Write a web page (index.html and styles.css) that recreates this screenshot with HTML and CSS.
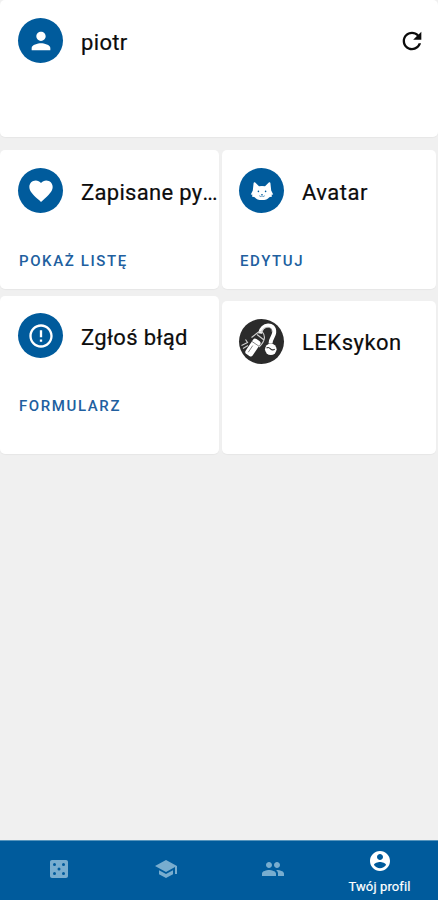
FILE: index.html
```html
<!DOCTYPE html>
<html lang="pl">
<head>
<meta charset="utf-8">
<meta name="viewport" content="width=device-width, initial-scale=1">
<title>Twój profil</title>
<link rel="stylesheet" href="styles.css">
</head>
<body>
<div class="app">
  <main class="content">
    <section class="card card-user">
      <span class="avatar"><svg viewBox="0 0 24 24"><path d="M12 12c2.21 0 4-1.79 4-4s-1.79-4-4-4-4 1.79-4 4 1.79 4 4 4zm0 2c-2.67 0-8 1.34-8 4v2h16v-2c0-2.66-5.33-4-8-4z"/></svg></span>
      <h2 class="title title-user">piotr</h2>
      <button class="refresh" aria-label="Odśwież"><svg viewBox="0 0 24 24"><path d="M17.65 6.35C16.2 4.9 14.21 4 12 4c-4.42 0-7.99 3.58-7.99 8s3.57 8 7.99 8c3.73 0 6.84-2.55 7.73-6h-2.08c-.82 2.33-3.04 4-5.65 4-3.31 0-6-2.69-6-6s2.69-6 6-6c1.66 0 3.14.69 4.22 1.78L13 11h7V4l-2.35 2.35z"/></svg></button>
    </section>
    <div class="columns">
      <div class="column column-left">
        <section class="card card-saved">
          <div class="head">
            <span class="avatar"><svg viewBox="0 0 24 24"><path d="M12 21.35l-1.45-1.32C5.4 15.36 2 12.28 2 8.5 2 5.42 4.42 3 7.5 3c1.74 0 3.41.81 4.5 2.09C13.09 3.81 14.76 3 16.5 3 19.58 3 22 5.42 22 8.5c0 3.78-3.4 6.86-8.55 11.54L12 21.35z"/></svg></span>
            <h2 class="title title-saved">Zapisane py<span class="dots">...</span></h2>
          </div>
          <a class="action action-list">POKAŻ LISTĘ</a>
        </section>
        <section class="card card-report">
          <div class="head">
            <span class="avatar"><svg viewBox="0 0 24 24"><path d="M11 15h2v2h-2zm0-8h2v6h-2zm.99-5C6.47 2 2 6.48 2 12s4.47 10 9.99 10C17.52 22 22 17.52 22 12S17.52 2 11.99 2zM12 20c-4.42 0-8-3.58-8-8s3.58-8 8-8 8 3.58 8 8-3.58 8-8 8z"/></svg></span>
            <h2 class="title title-report">Zgłoś błąd</h2>
          </div>
          <a class="action action-form">FORMULARZ</a>
        </section>
      </div>
      <div class="column column-right">
        <section class="card card-avatar">
          <div class="head">
            <span class="avatar"><svg viewBox="0 0 28 28"><path d="M5.600 5.900c.3-.8 1-.9 1.600-.3L11 9.300q3-.6 6 0l3.800-3.700c.6-.6 1.300-.5 1.600.3l.8 7.700 2 3.800-1.700.4.600 1.700-2.800.7q-2.200 2.900-7.300 2.900t-7.300-2.900l-2.800-.7.600-1.700-1.700-.4 2-3.800z"/><g fill="#005b9c"><circle cx="10.400" cy="14.400" r=".8"/><circle cx="17.600" cy="14.400" r=".8"/><path d="M12.900 17h2.200L14 18.200z"/></g><path d="M11.300 18.800q1.400 1.300 2.700 0 1.300 1.300 2.700 0" fill="none" stroke="#005b9c" stroke-width=".7"/></svg></span>
            <h2 class="title title-avatar">Avatar</h2>
          </div>
          <a class="action action-edit">EDYTUJ</a>
        </section>
        <section class="card card-lexicon">
          <div class="head">
            <span class="avatar avatar-dark"><svg viewBox="0 0 45 45"><path d="M21 14.500C22.500 4.500 36 3.500 35.200 13.500c-.4 4.500-3.700 6-3.700 11" fill="none" stroke="#fff" stroke-width="4"/><path d="M22.500 12.500c2.500-5.500 10.500-6 10.500.5" fill="none" stroke="#999" stroke-width=".7"/><circle cx="31.800" cy="30.300" r="5.800"/><path d="M27.500 29q2-1.300 4 .8t4.200.5" fill="none" stroke="#2b2b2b" stroke-width="1.200"/><g transform="rotate(34 14 28)"><rect x="10" y="19.500" width="8.500" height="18" rx="2.500"/><path d="M10 24h8.500M13 27v8" fill="none" stroke="#777" stroke-width=".8"/></g><path d="M12.500 18.500l7-5.500q5.500-1.500 6 5.500-.5 5-5.500 9.500M18 15.500l7 5.500M2.500 26.500l6-3-2-3M4 29.500l5-3" fill="none" stroke="#ccc" stroke-width="1.200"/></svg></span>
            <h2 class="title title-lexicon">LEKsykon</h2>
          </div>
        </section>
      </div>
    </div>
  </main>
  <nav class="nav">
    <a class="tab"><svg viewBox="0 0 24 24"><path fill-rule="evenodd" d="M19 3H5c-1.100 0-2 .9-2 2v14c0 1.100.9 2 2 2h14c1.100 0 2-.9 2-2V5c0-1.100-.9-2-2-2zM7.500 18a1.500 1.500 0 1 1 0-3 1.500 1.500 0 0 1 0 3zm0-9a1.500 1.500 0 1 1 0-3 1.500 1.500 0 0 1 0 3zm4.500 4.500a1.500 1.500 0 1 1 0-3 1.500 1.500 0 0 1 0 3zm4.500 4.500a1.500 1.500 0 1 1 0-3 1.500 1.500 0 0 1 0 3zm0-9a1.500 1.500 0 1 1 0-3 1.500 1.500 0 0 1 0 3z"/></svg></a>
    <a class="tab"><svg viewBox="0 0 24 24"><path d="M5 13.180v4L12 21l7-3.820v-4L12 17l-7-3.820zM12 3L1 9l11 6 9-4.910V17h2V9L12 3z"/></svg></a>
    <a class="tab"><svg viewBox="0 0 24 24"><path d="M16 11c1.660 0 2.990-1.340 2.990-3S17.660 5 16 5c-1.660 0-3 1.340-3 3s1.340 3 3 3zm-8 0c1.660 0 2.990-1.340 2.990-3S9.660 5 8 5C6.340 5 5 6.340 5 8s1.340 3 3 3zm0 2c-2.330 0-7 1.170-7 3.500V19h14v-2.500c0-2.330-4.670-3.500-7-3.500zm8 0c-.29 0-.62.020-.97.050 1.160.84 1.970 1.970 1.970 3.450V19h6v-2.500c0-2.330-4.670-3.500-7-3.500z"/></svg></a>
    <a class="tab tab-active"><svg viewBox="0 0 24 24"><path d="M12 2C6.480 2 2 6.480 2 12s4.480 10 10 10 10-4.480 10-10S17.520 2 12 2zm0 3c1.660 0 3 1.340 3 3s-1.340 3-3 3-3-1.340-3-3 1.340-3 3-3zm0 14.200c-2.500 0-4.710-1.280-6-3.220.03-1.990 4-3.080 6-3.080 1.990 0 5.970 1.090 6 3.080-1.290 1.940-3.500 3.220-6 3.220z"/></svg><span class="tab-label">Twój profil</span></a>
  </nav>
</div>
</body>
</html>
```
FILE: styles.css
```css
* { box-sizing: border-box; }

body {
  margin: 0;
  background: #f0f0f0;
  color: #0c0c0c;
  font-family: Roboto, "Liberation Sans", sans-serif;
}

.app {
  display: flex;
  flex-direction: column;
  height: 900px;
  overflow: hidden;
}

.content { flex: 1; }

.card {
  background: #fff;
  border-radius: 5px;
  box-shadow: 0 1px 1px rgba(0, 0, 0, 0.04);
}

.card-user {
  display: flex;
  align-items: flex-start;
  height: 137px;
  padding: 18px 12px 0 18px;
}

.columns {
  display: grid;
  grid-template-columns: 219px 214px;
  column-gap: 3px;
  padding-top: 13px;
}

.column {
  display: flex;
  flex-direction: column;
}

.column-left { gap: 7px; }
.column-right { gap: 12px; }

.column .card { padding: 18px 0 0 18px; }
.column-right .card { padding-left: 17px; }
.card-saved, .card-avatar { height: 139px; }
.column .card-report { height: 158px; padding-top: 17px; }
.card-lexicon { height: 153px; }

.head { display: flex; height: 48px; }

.avatar {
  display: flex;
  flex: none;
  align-items: center;
  justify-content: center;
  width: 45px;
  height: 45px;
  border-radius: 50%;
  background: #005b9c;
}

.avatar svg {
  width: 28px;
  height: 28px;
  fill: #fff;
}

.avatar-dark { background: #2b2b2b; overflow: hidden; }
.avatar-dark svg { width: 45px; height: 45px; }

.title {
  margin: 0 0 0 18px;
  font-size: 22px;
  font-weight: 400;
  line-height: 49px;
  letter-spacing: 0.35px;
  white-space: nowrap;
  -webkit-text-stroke: 0.2px currentColor;
}

.title-saved { letter-spacing: 0.3px; }
.title-avatar, .title-lexicon { letter-spacing: 0.5px; }
.title-lexicon { line-height: 48px; }
.dots { letter-spacing: -1px; }

.refresh {
  display: flex;
  margin: 9px 0 0 auto;
  padding: 0;
  border: 0;
  background: none;
}

.refresh svg { width: 28px; height: 28px; fill: #0c0c0c; }

.action {
  display: block;
  margin: 35px 0 0 1px;
  color: #215f9f;
  font-size: 15px;
  font-weight: 500;
  line-height: 20px;
  letter-spacing: 1.6px;
}

.nav {
  display: flex;
  height: 60px;
  padding: 0 5px;
  border-top: 1px solid #5795bd;
  background: #005b9c;
}

.tab {
  display: flex;
  flex: 1;
  flex-direction: column;
  align-items: center;
  padding-top: 16px;
}

.tab svg { width: 24px; height: 24px; fill: #78adcf; }

.tab-active { padding-top: 8px; color: #fff; }
.tab-active svg { fill: #fff; }

.tab-label {
  margin-top: 6px;
  font-size: 13px;
  line-height: 16px;
  letter-spacing: 0.12px;
  white-space: nowrap;
  -webkit-text-stroke: 0.2px currentColor;
}
```
